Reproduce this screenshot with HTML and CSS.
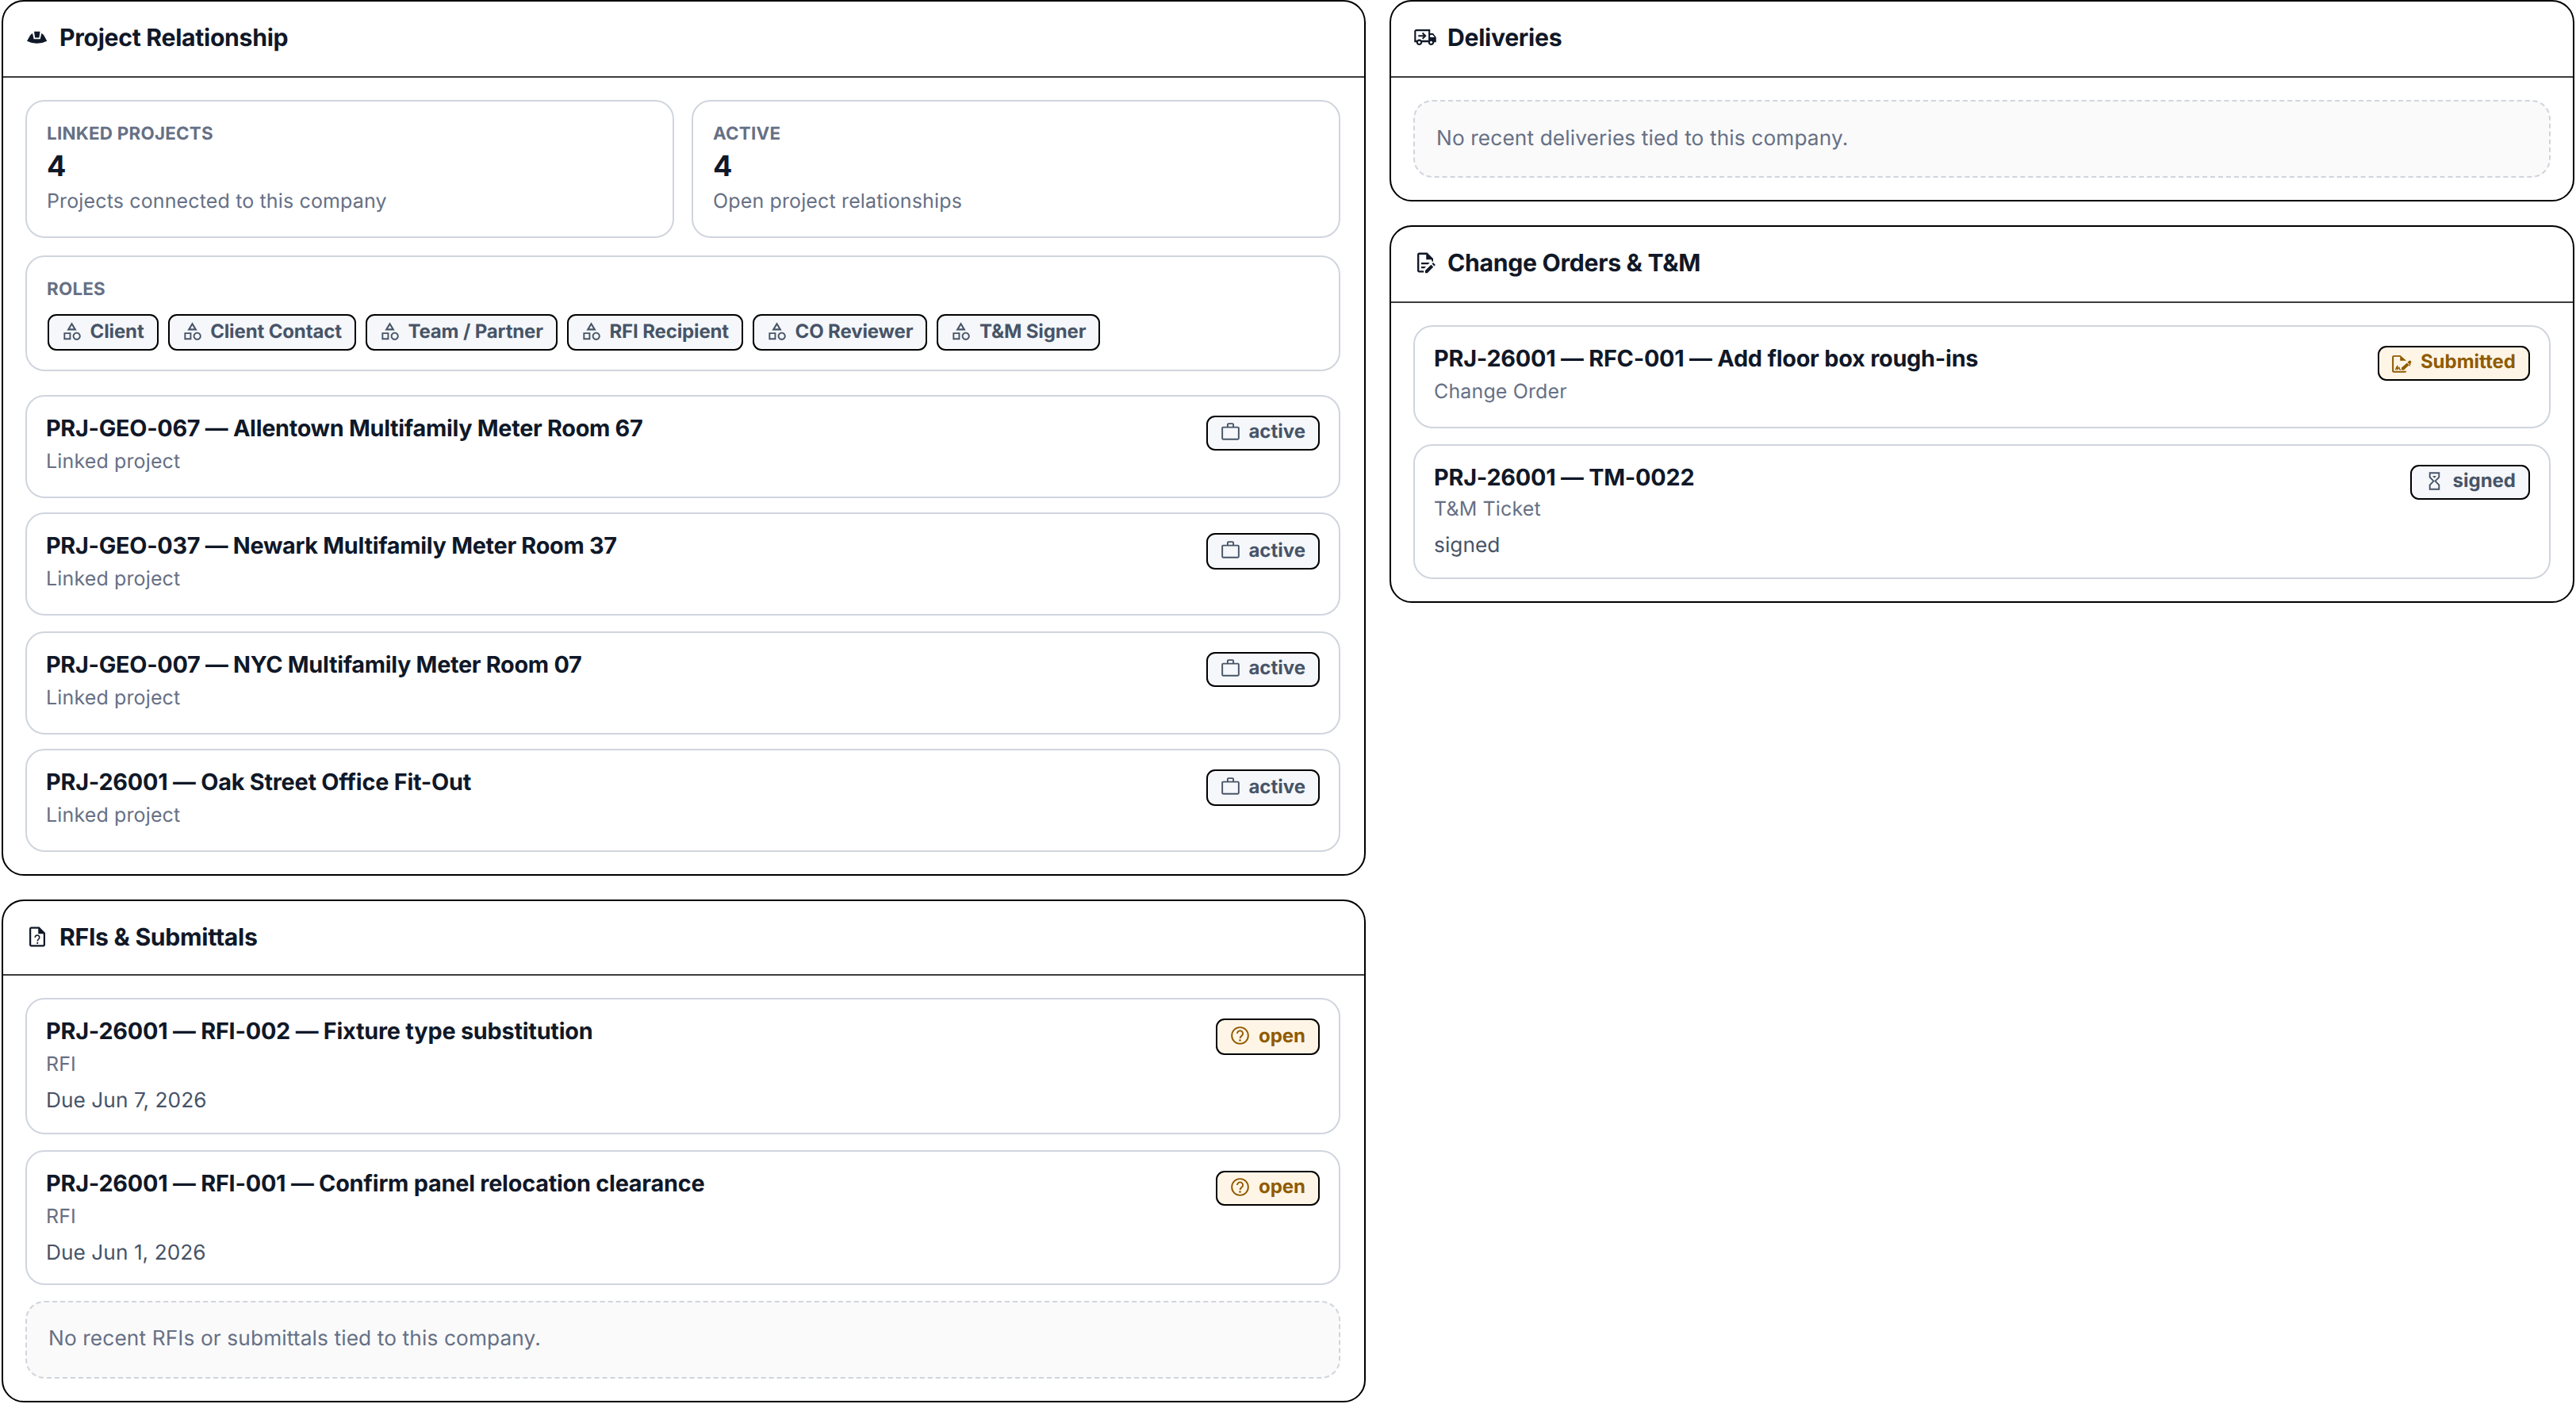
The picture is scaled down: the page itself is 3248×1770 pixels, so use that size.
FILE: index.html
```
<!DOCTYPE html>
<html lang="en">
<head>
<meta charset="utf-8">
<title>Company activity</title>
<link rel="stylesheet" href="styles.css">
</head>
<body>
<svg class="sprite" aria-hidden="true">
  <symbol id="i-helmet" viewBox="0 0 24 24"><path d="M1.6 15.7 4.6 10.4Q5.6 8.8 7.2 8L8.5 13.8H15L16.2 8Q18 8.8 18.9 10.4L21.8 15.7Q11.7 20.7 1.6 15.7ZM8.8 6.2H14.8L13.9 12.4H9.7Z"/></symbol>
  <symbol id="i-truck" viewBox="0 0 24 24"><path d="M20 8h-3V4H3c-1.1 0-2 .9-2 2v11h2c0 1.66 1.34 3 3 3s3-1.34 3-3h6c0 1.66 1.34 3 3 3s3-1.34 3-3h2v-5l-3-4zm-.5 1.5l1.96 2.5H17V9.5h2.5zM6 18.3c-.7 0-1.3-.6-1.3-1.3s.6-1.3 1.3-1.3 1.3.6 1.3 1.3-.6 1.3-1.3 1.3zm2.22-3.3c-.55-.61-1.33-1-2.22-1s-1.67.39-2.22 1H2.7V5.7h12.6v9.3H8.22zM18 18.3c-.7 0-1.3-.6-1.3-1.3s.6-1.3 1.3-1.3 1.3.6 1.3 1.3-.6 1.3-1.3 1.3z"/><path d="M5 9.7h5.2L8.7 8.1 9.8 7l3.5 3.5L9.8 14l-1.1-1.1 1.5-1.6H5z"/></symbol>
  <symbol id="i-doc-question" viewBox="0 0 24 24"><path d="M14 2H6c-1.1 0-2 .9-2 2v16c0 1.1.9 2 2 2h12c1.1 0 2-.9 2-2V8l-6-6zM5.8 20.2V3.8H13V9h5.2v11.2z"/><path d="M9.8 12.7a2.2 2.2 0 1 1 3.7 1.5c-.9.8-1.3 1.2-1.3 2.2" fill="none" stroke="currentColor" stroke-width="1.3"/><circle cx="12.2" cy="18.3" r=".85"/></symbol>
  <symbol id="i-doc-edit" viewBox="0 0 24 24"><path d="M20 11V8l-6-6H6c-1.1 0-2 .9-2 2v16c0 1.1.9 2 2 2h4.500v-1.900H5.900V3.900H13V9h5.200l.8 2z"/><path d="M8 12h8.500l-1.600 1.700H8zM8 16h4.800l-1.600 1.700H8zM12 22.500v-2.500l5.900-5.900 2.300 2.300-6 6.100zM18.800 13.200l1.200-1.200 2.300 2.300-1.200 1.200z"/></symbol>
  <symbol id="i-category" viewBox="0 0 24 24"><path d="M12 2l-5.500 9h11L12 2zm0 3.600L14.100 9.200H9.900L12 5.600zM17.500 13c-2.490 0-4.500 2.010-4.500 4.500s2.010 4.500 4.500 4.500 4.500-2.010 4.500-4.500-2.010-4.500-4.500-4.500zm0 7.300c-1.550 0-2.800-1.250-2.800-2.800s1.250-2.800 2.800-2.800 2.800 1.250 2.800 2.800-1.250 2.800-2.800 2.800zM3 21.500h8v-8H3v8zm1.700-6.300h4.600v4.600H4.700v-4.600z"/></symbol>
  <symbol id="i-work" viewBox="0 0 24 24"><path d="M3.800 6.800h16.400a1 1 0 0 1 1 1v11.400a1 1 0 0 1-1 1H3.800a1 1 0 0 1-1-1V7.800a1 1 0 0 1 1-1zM8.800 6.800V3.800a1 1 0 0 1 1-1h4.400a1 1 0 0 1 1 1v3" fill="none" stroke="currentColor" stroke-width="1.7"/></symbol>
  <symbol id="i-help" viewBox="0 0 24 24"><g fill="none" stroke="currentColor" stroke-width="1.7"><circle cx="12" cy="12" r="9.2"/><path d="M8.9 9.700a3.150 3.150 0 1 1 5.500 2.100c-1.100 1.100-2.300 1.600-2.300 3.300"/></g><circle cx="12" cy="17.300" r="1.150"/></symbol>
  <symbol id="i-sign" viewBox="0 0 24 24"><path d="M2.900 4.400h7.300L17 10.400h-7V6.100H2.800v16h14.300a1.700 1.700 0 0 1-1.700 1.700H2.900A1.900 1.900 0 0 1 1 21.900V6.300a1.900 1.900 0 0 1 1.900-1.900zM11.600 20.800v-2.500l6.100-5.500 2.400 2.400-5.900 5.600zM18.200 12.300l1.900-1.800c.7-.6 1.300-.3 1.900.3s.9 1.200.3 1.900l-.8 1 .3 1-1.200 1.900-.8-.4.7-1.700z"/><path d="M4.800 20.600c.7-2 1.500-3.500 2.200-4.200.6.9-.3 2.500-.3 3.700.9-.8 1.500-1.800 2.200-2 .4.700-.1 1.700.6 2.100h1.300" fill="none" stroke="currentColor" stroke-width="1.200"/></symbol>
  <symbol id="i-hourglass" viewBox="0 0 24 24"><path d="M6 2v6l4 4-4 4v6h12v-6l-4-4 4-4V2H6zm10.300 14.600v3.700H7.700v-3.700l4.300-4.300zm-4.300-4.900L7.700 7.400V3.700h8.600v3.700z"/><path d="M9.800 6.300h4.400L12 8.700z"/></symbol>
</svg>

<main class="board">
  <div class="column column--main">
    <section class="panel">
      <header class="panel__head"><svg class="icon"><use href="#i-helmet"/></svg><h2>Project Relationship</h2></header>
      <div class="panel__body">
        <div class="stats">
          <div class="stat"><span class="label">LINKED PROJECTS</span><strong class="stat__value">4</strong><span class="stat__note">Projects connected to this company</span></div>
          <div class="stat"><span class="label">ACTIVE</span><strong class="stat__value">4</strong><span class="stat__note">Open project relationships</span></div>
        </div>
        <div class="roles">
          <span class="label">ROLES</span>
          <div class="roles__list">
            <span class="badge badge--tall"><svg class="icon"><use href="#i-category"/></svg>Client</span>
            <span class="badge badge--tall"><svg class="icon"><use href="#i-category"/></svg>Client Contact</span>
            <span class="badge badge--tall"><svg class="icon"><use href="#i-category"/></svg>Team / Partner</span>
            <span class="badge badge--tall"><svg class="icon"><use href="#i-category"/></svg>RFI Recipient</span>
            <span class="badge badge--tall"><svg class="icon"><use href="#i-category"/></svg>CO Reviewer</span>
            <span class="badge badge--tall"><svg class="icon"><use href="#i-category"/></svg>T&amp;M Signer</span>
          </div>
        </div>
        <div class="rows rows--projects">
          <article class="row"><div><h3>PRJ-GEO-067 — Allentown Multifamily Meter Room 67</h3><p class="row__kind">Linked project</p></div><span class="badge"><svg class="icon"><use href="#i-work"/></svg>active</span></article>
          <article class="row"><div><h3>PRJ-GEO-037 — Newark Multifamily Meter Room 37</h3><p class="row__kind">Linked project</p></div><span class="badge badge--tall"><svg class="icon"><use href="#i-work"/></svg>active</span></article>
          <article class="row"><div><h3>PRJ-GEO-007 — NYC Multifamily Meter Room 07</h3><p class="row__kind">Linked project</p></div><span class="badge"><svg class="icon"><use href="#i-work"/></svg>active</span></article>
          <article class="row"><div><h3 class="row__title--wide">PRJ-26001 — Oak Street Office Fit-Out</h3><p class="row__kind">Linked project</p></div><span class="badge badge--tall"><svg class="icon"><use href="#i-work"/></svg>active</span></article>
        </div>
      </div>
    </section>

    <section class="panel">
      <header class="panel__head panel__head--short"><svg class="icon"><use href="#i-doc-question"/></svg><h2>RFIs &amp; Submittals</h2></header>
      <div class="panel__body">
        <div class="rows">
          <article class="row row--due"><div><h3 class="row__title--wide">PRJ-26001 — RFI-002 — Fixture type substitution</h3><p class="row__kind">RFI</p><p class="row__detail">Due Jun 7, 2026</p></div><span class="badge badge--tall badge--warn"><svg class="icon"><use href="#i-help"/></svg>open</span></article>
          <article class="row row--detail"><div><h3 class="row__title--wide">PRJ-26001 — RFI-001 — Confirm panel relocation clearance</h3><p class="row__kind">RFI</p><p class="row__detail">Due Jun 1, 2026</p></div><span class="badge badge--warn"><svg class="icon"><use href="#i-help"/></svg>open</span></article>
          <p class="empty">No recent RFIs or submittals tied to this company.</p>
        </div>
      </div>
    </section>
  </div>

  <div class="column column--side">
    <section class="panel">
      <header class="panel__head"><svg class="icon"><use href="#i-truck"/></svg><h2>Deliveries</h2></header>
      <div class="panel__body"><p class="empty empty--solo">No recent deliveries tied to this company.</p></div>
    </section>

    <section class="panel">
      <header class="panel__head"><svg class="icon"><use href="#i-doc-edit"/></svg><h2>Change Orders &amp; T&amp;M</h2></header>
      <div class="panel__body">
        <div class="rows">
          <article class="row"><div><h3 class="row__title--wide">PRJ-26001 — RFC-001 — Add floor box rough-ins</h3><p class="row__kind">Change Order</p></div><span class="badge badge--warn"><svg class="icon"><use href="#i-sign"/></svg>Submitted</span></article>
          <article class="row row--detail"><div><h3 class="row__title--wide">PRJ-26001 — TM-0022</h3><p class="row__kind row__kind--tight">T&amp;M Ticket</p><p class="row__detail">signed</p></div><span class="badge"><svg class="icon"><use href="#i-hourglass"/></svg>signed</span></article>
        </div>
      </div>
    </section>
  </div>
</main>
</body>
</html>
```
FILE: styles.css
```
:root {
  --ink: #101828;
  --body: #475467;
  --muted: #667085;
  --line: #d0d5dd;
  --edge: #000;
}

* { box-sizing: border-box; }

body {
  margin: 0;
  background: #fff;
  color: var(--ink);
  font-family: Inter, "Liberation Sans", sans-serif;
  text-rendering: geometricPrecision;
}

h2, h3, p { margin: 0; }

.sprite { display: none; }

.icon {
  flex: none;
  width: 27px;
  height: 27px;
  fill: currentColor;
}

/* Page columns */
.board {
  display: grid;
  grid-template-columns: 1720px 1494px;
  column-gap: 30px;
  align-items: start;
  padding: 0 2px;
}

.column {
  display: flex;
  flex-direction: column;
  gap: 30px;
}

/* Panels */
.panel {
  border: 2px solid var(--edge);
  border-radius: 28px;
  background: #fff;
}

.panel__head {
  display: flex;
  align-items: center;
  gap: 13px;
  height: 96px;
  padding: 0 28px 4px;
  border-bottom: 2px solid #3d3d3d;
}

.panel__head--short {
  height: 94px;
  padding-bottom: 2px;
}

.panel__head .icon {
  width: 30px;
  height: 30px;
}

.panel__head h2 {
  padding-top: 2px;
  font-size: 30.2px;
  line-height: 36px;
  font-weight: 700;
  letter-spacing: -0.01em;
}

.panel__body { padding: 28px; }

.column--main .panel__body { padding-right: 30px; }

.label {
  display: block;
  color: var(--muted);
  font-size: 22.4px;
  line-height: 28px;
  font-weight: 700;
  letter-spacing: 0.01em;
}

/* Summary tiles */
.stats {
  display: grid;
  grid-template-columns: 1fr 1fr;
  gap: 22px;
}

.stat,
.roles,
.row {
  border: 2px solid var(--line);
  border-radius: 24px;
}

.stat {
  height: 174px;
  padding: 27px 25px;
}

.stat__value {
  display: block;
  margin-top: 6px;
  font-size: 36px;
  line-height: 40px;
  font-weight: 700;
}

.stat__note {
  display: block;
  margin-top: 9px;
  color: var(--muted);
  font-size: 24.96px;
  line-height: 32px;
  letter-spacing: 0.16px;
}

.roles {
  height: 146px;
  margin-top: 22px;
  padding: 27px 25px;
}

.roles__list {
  display: flex;
  gap: 12px;
  margin: 17px 0 0 1px;
  letter-spacing: -0.14px;
}

/* Record rows */
.rows {
  display: flex;
  flex-direction: column;
  gap: 20px;
}

.rows--projects {
  gap: 18px;
  margin-top: 30px;
}

.rows--projects .row:nth-child(3) { margin-top: 2px; }

.row {
  display: flex;
  justify-content: space-between;
  align-items: flex-start;
  height: 130px;
  padding: 22px 24px;
}

.row--detail { height: 170px; }
.row--due { height: 172px; }

.row h3 {
  font-size: 28.8px;
  line-height: 36px;
  font-weight: 700;
  letter-spacing: -0.01em;
}

.row .row__title--wide { letter-spacing: -0.0075em; }

.row__kind {
  margin-top: 8px;
  color: var(--muted);
  font-size: 24.96px;
  line-height: 32px;
  letter-spacing: 0.16px;
}

.row__kind--tight {
  margin-top: 6px;
  margin-bottom: 3px;
}

.row__detail {
  margin-top: 13px;
  color: var(--body);
  font-size: 26.24px;
  line-height: 34px;
  letter-spacing: 0.05px;
}

/* Status badges */
.badge {
  display: inline-flex;
  flex: none;
  align-items: center;
  gap: 9.6px;
  height: 44px;
  padding: 0 16px 4px 15px;
  border: 2px solid var(--edge);
  border-radius: 11px;
  background: #f5f7fa;
  color: var(--body);
  font-size: 24px;
  line-height: 30px;
  font-weight: 700;
}

.row .badge { margin-top: 2px; }

.badge--tall {
  height: 46px;
  padding-bottom: 3px;
}

.badge--warn {
  background: #fff5e6;
  color: #8f5b00;
}

/* Empty state */
.empty {
  display: flex;
  align-items: center;
  height: 98px;
  padding: 0 27px 3px;
  border: 2px dashed var(--line);
  border-radius: 24px;
  background: #fafafa;
  color: var(--muted);
  font-size: 26.24px;
  line-height: 34px;
  letter-spacing: 0.13px;
}

.empty--solo { padding-bottom: 0; }
```
